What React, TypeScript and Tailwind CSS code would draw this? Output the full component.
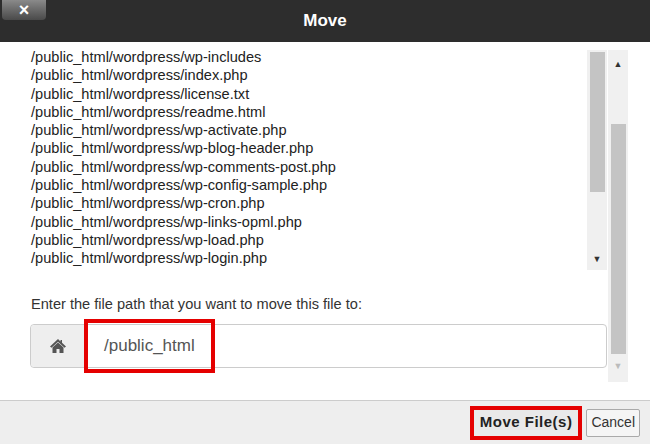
import React from "react";

const files = [
  "/public_html/wordpress/wp-includes",
  "/public_html/wordpress/index.php",
  "/public_html/wordpress/license.txt",
  "/public_html/wordpress/readme.html",
  "/public_html/wordpress/wp-activate.php",
  "/public_html/wordpress/wp-blog-header.php",
  "/public_html/wordpress/wp-comments-post.php",
  "/public_html/wordpress/wp-config-sample.php",
  "/public_html/wordpress/wp-cron.php",
  "/public_html/wordpress/wp-links-opml.php",
  "/public_html/wordpress/wp-load.php",
  "/public_html/wordpress/wp-login.php",
  "/public_html/wordpress/wp-mail.php",
];

export default function App() {
  return (
    <div className="w-[650px] h-[444px] flex flex-col bg-white overflow-hidden" style={{ fontFamily: '"Liberation Sans", Arial, sans-serif' }}>
      <div className="relative h-[42px] bg-[#2d2d2d] flex items-center justify-center">
        <div className="absolute left-[2px] top-0 w-[44px] h-[20px] rounded-b-[4px] bg-gradient-to-b from-[#8a8a8a] to-[#4a4a4a] flex items-center justify-center text-white font-bold text-[18px] leading-none">×</div>
        <span className="text-white font-bold text-[17px]">Move</span>
      </div>
      <div className="flex-1 flex pl-[22px] pt-[8px] pr-[22px]">
        <div className="flex-1 flex flex-col">
          <div className="h-[220px] flex overflow-hidden">
            <div className="flex-1 pl-[9px] text-[14.6px] text-[#222] leading-[18.3px] overflow-hidden -mt-[2px]">
              {files.map((f) => (
                <div key={f}>{f}</div>
              ))}
            </div>
            <div className="w-[20px] bg-[#f0f0f0] flex flex-col items-center py-[2px]">
              <div className="w-[15px] h-[140px] bg-[#c4c4c4]"></div>
              <div className="flex-1"></div>
              <div className="text-[9px] text-[#333] mb-[2px]">▼</div>
            </div>
          </div>
          <div className="mt-[24px] pl-[9px] text-[14.6px] text-[#333]">Enter the file path that you want to move this file to:</div>
          <div className="mt-[8px] ml-[8px] h-[44px] flex border border-[#ccc] rounded-[4px]">
            <div className="w-[55px] bg-[#eee] border-r border-[#ccc] flex items-center justify-center rounded-l-[4px]">
              <svg width="18" height="16" viewBox="0 0 18 16"><path d="M9 1 L1 8.5 L2.5 9.8 L9 3.8 L15.5 9.8 L17 8.5 L13 4.8 V2 H11.5 V3.4 Z M3.5 9.5 V15 H7.5 V11 H10.5 V15 H14.5 V9.5 L9 4.6 Z" fill="#555"/></svg>
            </div>
            <div className="flex-1 flex items-center">
              <div className="h-[54px] -ml-[2px] border-[4px] border-[#e50000] flex items-center pl-[16px] pr-[16px] text-[17px] text-[#555]">/public_html</div>
            </div>
          </div>
        </div>
        <div className="w-[20px] ml-[1px] bg-[#f0f0f0] flex flex-col items-center h-[332px]">
          <div className="h-[30px] text-[9px] text-[#333] flex items-center">▲</div>
          <div className="w-[15px] h-[230px] mt-[44px] bg-[#c4c4c4]"></div>
          <div className="text-[9px] text-[#bbb] mt-[6px]">▼</div>
        </div>
      </div>
      <div className="h-[44px] bg-[#eeeeee] border-t border-[#ccc] flex items-center justify-end pr-[10px] gap-[4px]">
        <div className="h-[34px] border-[4px] border-[#e50000] flex items-center px-[6px] text-[15px] font-bold text-[#222] bg-[#e9e9e9]" style={{ letterSpacing: "0.5px" }}>Move File(s)</div>
        <div className="h-[28px] border border-[#aaa] rounded-[2px] bg-[#f5f5f5] flex items-center px-[4px] text-[14px] text-[#333]">Cancel</div>
      </div>
    </div>
  );
}
